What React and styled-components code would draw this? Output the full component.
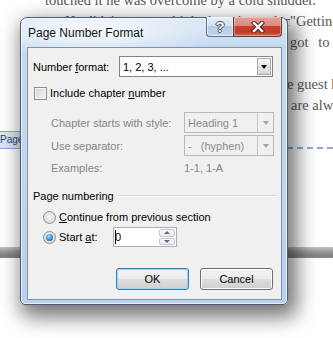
import React from "react";
import styled, { createGlobalStyle } from "styled-components";

const GlobalStyle = createGlobalStyle`
  html, body {
    margin: 0;
    padding: 0;
    background: #fff;
  }
  body {
    width: 333px;
    height: 338px;
    overflow: hidden;
  }
`;

function App() {
  return (
    <Screen>
      <GlobalStyle />
      <DocPage>
        <TextBlock>
          <Line $indent={45}>touched it he was overcome by a cold shudder.</Line>
          <Line $indent={65}>
            <Lead $w={225}>He didn't want to think about it any longer. </Lead>
            <Tail>"Getting</Tail>
          </Line>
          <Line $indent={45}>
            <Lead $w={245}>late, and I think that it is time that we all </Lead>
            <Tail $spacing={6}>got to go</Tail>
          </Line>
          <Line $indent={45} />
          <Line $indent={45}>
            <Lead $w={242}>Everyone at the table knew that th</Lead>
            <Tail>e guest house</Tail>
          </Line>
          <Line $indent={45}>
            <Lead $w={246}>was closed at night, and the doors </Lead>
            <Tail>are always</Tail>
          </Line>
        </TextBlock>
        <FooterRow>
          <FooterTag>Page</FooterTag>
          <DashedRule />
        </FooterRow>
        <PageGap />
      </DocPage>

      <Dialog>
        <TitleBar>
          <Title>Page Number Format</Title>
          <CaptionGroup>
            <HelpButton>
              <HelpGlyph>?</HelpGlyph>
            </HelpButton>
            <CloseButton>
              <svg width="14" height="12" viewBox="0 0 14 12">
                <path d="M3 2 L11 10 M11 2 L3 10" stroke="#4a2620" strokeWidth="4.4" strokeLinecap="square" fill="none" />
                <path d="M3 2 L11 10 M11 2 L3 10" stroke="#ffffff" strokeWidth="2.4" strokeLinecap="square" fill="none" />
              </svg>
            </CloseButton>
          </CaptionGroup>
        </TitleBar>

        <ClientArea>
          <FieldRow>
            <FieldLabel $w={86}>
              Number <u>f</u>ormat:
            </FieldLabel>
            <Combo $w={154}>
              <ComboText>1, 2, 3, ...</ComboText>
              <ComboButton>
                <Arrow />
              </ComboButton>
            </Combo>
          </FieldRow>

          <FieldRow $h={14} $mt={9} $indent={1}>
            <CheckBox />
            <OptionText>
              Include chapter <u>n</u>umber
            </OptionText>
          </FieldRow>

          <FieldRow $mt={12} $indent={18}>
            <FieldLabel $w={133} $disabled>
              Chapter starts with style:
            </FieldLabel>
            <Combo $w={90} $disabled>
              <ComboText>Heading 1</ComboText>
              <ComboButton $disabled>
                <Arrow $disabled />
              </ComboButton>
            </Combo>
          </FieldRow>

          <FieldRow $mt={2} $indent={18}>
            <FieldLabel $w={133} $disabled>
              Use separator:
            </FieldLabel>
            <Combo $w={90} $disabled>
              <ComboText>-   (hyphen)</ComboText>
              <ComboButton $disabled>
                <Arrow $disabled />
              </ComboButton>
            </Combo>
          </FieldRow>

          <FieldRow $h={15} $mt={4} $indent={18}>
            <FieldLabel $w={133} $disabled>
              Examples:
            </FieldLabel>
            <FieldLabel $disabled>1-1, 1-A</FieldLabel>
          </FieldRow>

          <FieldRow $h={15} $mt={13}>
            <GroupTitle>Page numbering</GroupTitle>
            <GroupRule />
          </FieldRow>

          <FieldRow $h={14} $mt={7} $indent={10}>
            <Radio />
            <OptionText>
              <u>C</u>ontinue from previous section
            </OptionText>
          </FieldRow>

          <FieldRow $h={20} $mt={3} $indent={10}>
            <Radio $checked />
            <OptionText $w={54}>
              Start <u>a</u>t:
            </OptionText>
            <SpinField>
              <SpinText>
                <Caret />0
              </SpinText>
              <SpinButtons>
                <SpinButton>
                  <SmallArrow $up />
                </SpinButton>
                <SpinButton>
                  <SmallArrow />
                </SpinButton>
              </SpinButtons>
            </SpinField>
          </FieldRow>

          <ButtonRow>
            <PushButton $default>OK</PushButton>
            <PushButton>Cancel</PushButton>
          </ButtonRow>
        </ClientArea>
      </Dialog>
    </Screen>
  );
}

export default App;

// Page behind the dialog

const Screen = styled.div`
  position: relative;
  width: 333px;
  height: 338px;
  overflow: hidden;
  background: #fff;
`;

const DocPage = styled.div`
  display: flex;
  flex-direction: column;
`;

const TextBlock = styled.div`
  margin-top: -10px;
  font-family: "Liberation Serif", "Times New Roman", serif;
  font-size: 14.5px;
  line-height: 21px;
  color: #5b5654;
`;

const Line = styled.div`
  display: flex;
  height: 21px;
  white-space: nowrap;
  padding-left: ${p => p.$indent || 0}px;
`;

const Lead = styled.span`
  flex: 0 0 ${p => p.$w}px;
  overflow: hidden;
`;

const Tail = styled.span`
  word-spacing: ${p => p.$spacing || 0}px;
`;

const FooterRow = styled.div`
  display: flex;
  align-items: flex-end;
  height: 18px;
  margin-top: 15px;
`;

const FooterTag = styled.div`
  flex: 0 0 auto;
  height: 16px;
  padding: 0 3px 0 0;
  background: #dbe5f3;
  border: 1px solid #8eaadb;
  border-left: none;
  font-family: "Liberation Sans", Arial, sans-serif;
  font-size: 10px;
  line-height: 16px;
  color: #23467a;
`;

const DashedRule = styled.div`
  flex: 1;
  height: 2px;
  background: repeating-linear-gradient(to right, #8eaadb 0 6px, transparent 6px 10px);
`;

const PageGap = styled.div`
  height: 11px;
  margin-top: 98px;
  background: linear-gradient(#c2c2c2, #9a9a9a 40%, #808080 80%, #8c8c8c);
`;

// Dialog window

const Dialog = styled.div`
  position: absolute;
  left: 20px;
  top: 17px;
  width: 268px;
  height: 288px;
  box-sizing: border-box;
  display: flex;
  flex-direction: column;
  padding: 0 5px 4px 6px;
  border: 1px solid #4d5e74;
  border-radius: 7px 7px 5px 5px;
  background:
    radial-gradient(ellipse 130px 26px at 70px 14px, rgba(255, 255, 255, 0.9), rgba(255, 255, 255, 0)),
    linear-gradient(180deg, #dbe8f6 0px, #c6daef 28px, #bad1ec 100%);
  box-shadow:
    inset 0 0 0 1px rgba(255, 255, 255, 0.6),
    5px 8px 20px 4px rgba(0, 0, 0, 0.55);
`;

const TitleBar = styled.div`
  display: flex;
  justify-content: space-between;
  align-items: flex-start;
  height: 29px;
`;

const Title = styled.div`
  padding: 8px 0 0 1px;
  font-family: "Liberation Sans", Arial, sans-serif;
  font-size: 12px;
  line-height: 15px;
  color: #111;
`;

const CaptionGroup = styled.div`
  display: flex;
  margin-top: -1px;
  height: 20px;
`;

const HelpButton = styled.div`
  width: 27px;
  box-sizing: border-box;
  display: flex;
  align-items: center;
  justify-content: center;
  border: 1px solid #5f7088;
  border-top: none;
  border-right: none;
  border-radius: 0 0 0 4px;
  background: linear-gradient(#e6eef8 0%, #d3e1f1 45%, #b5cae4 50%, #c3d6ec 100%);
  box-shadow: inset 0 0 0 1px rgba(255, 255, 255, 0.55);
`;

const HelpGlyph = styled.span`
  font-family: "Liberation Sans", Arial, sans-serif;
  font-weight: bold;
  font-size: 15px;
  line-height: 15px;
  color: #f2f2f2;
  text-shadow:
    1px 0 0 #4a5060, -1px 0 0 #4a5060, 0 1px 0 #4a5060, 0 -1px 0 #4a5060;
`;

const CloseButton = styled.div`
  width: 49px;
  box-sizing: border-box;
  display: flex;
  align-items: center;
  justify-content: center;
  border: 1px solid #5b3a36;
  border-top: none;
  border-radius: 0 0 4px 0;
  background: linear-gradient(#e4a396 0%, #d98a7c 45%, #c7412f 50%, #c23a28 80%, #d66a52 100%);
  box-shadow: inset 0 0 0 1px rgba(255, 220, 210, 0.45);
`;

const ClientArea = styled.div`
  flex: 1;
  display: flex;
  flex-direction: column;
  padding: 8px 5px 0 5px;
  border: 1px solid #8192a8;
  background: #f0f0f0;
  font-family: "Liberation Sans", Arial, sans-serif;
  font-size: 11px;
  color: #000;
`;

const FieldRow = styled.div`
  display: flex;
  align-items: center;
  height: ${p => p.$h || 21}px;
  margin-top: ${p => p.$mt || 0}px;
  padding-left: ${p => p.$indent || 0}px;
`;

const FieldLabel = styled.span`
  flex: 0 0 ${p => (p.$w ? `${p.$w}px` : "auto")};
  white-space: nowrap;
  color: ${p => (p.$disabled ? "#858585" : "#000")};
`;

const Combo = styled.div`
  flex: 0 0 ${p => p.$w}px;
  height: 21px;
  box-sizing: border-box;
  display: flex;
  border: 1px solid ${p => (p.$disabled ? "#b9b9b9" : "#7f8590")};
  background: ${p => (p.$disabled ? "#f0f0f0" : "#fff")};
  color: ${p => (p.$disabled ? "#8a8a8a" : "#000")};
`;

const ComboText = styled.span`
  flex: 1;
  display: flex;
  align-items: center;
  padding-left: 3px;
  white-space: pre;
`;

const ComboButton = styled.span`
  flex: 0 0 ${p => (p.$disabled ? 16 : 14)}px;
  display: flex;
  align-items: center;
  justify-content: center;
  margin: ${p => (p.$disabled ? "0" : "1px")};
  box-sizing: border-box;
  border: ${p => (p.$disabled ? "none" : "1px solid #a9a9a9")};
  border-left: 1px solid ${p => (p.$disabled ? "#c6c6c6" : "#a9a9a9")};
  background: ${p =>
    p.$disabled ? "#f0f0f0" : "linear-gradient(#f5f5f5, #e6e6e6 50%, #d6d6d6)"};
`;

const Arrow = styled.span`
  width: 0;
  height: 0;
  border-left: 3.5px solid transparent;
  border-right: 3.5px solid transparent;
  border-top: 4px solid ${p => (p.$disabled ? "#a6a6a6" : "#000")};
`;

const CheckBox = styled.span`
  flex: 0 0 13px;
  height: 13px;
  box-sizing: border-box;
  border: 1px solid #8e8f8f;
  background: linear-gradient(135deg, #d4d4d4, #f7f7f7);
  box-shadow: inset 0 0 0 1px #f4f4f4;
`;

const OptionText = styled.span`
  flex: 0 0 ${p => (p.$w ? `${p.$w}px` : "auto")};
  margin-left: 3px;
  white-space: nowrap;
`;

const GroupTitle = styled.span`
  flex: 0 0 auto;
  white-space: nowrap;
`;

const GroupRule = styled.span`
  flex: 1;
  height: 1px;
  margin-left: 3px;
  background: #d3dce3;
  box-shadow: 0 1px 0 #fff;
`;

const Radio = styled.span`
  position: relative;
  flex: 0 0 13px;
  height: 13px;
  box-sizing: border-box;
  border-radius: 50%;
  border: 1px solid #8d8f90;
  background: radial-gradient(circle at 50% 40%, #f7f7f7, #d6d6d6 80%);

  &::after {
    content: "";
    display: ${p => (p.$checked ? "block" : "none")};
    position: absolute;
    left: 2px;
    top: 2px;
    width: 7px;
    height: 7px;
    border-radius: 50%;
    background: radial-gradient(circle at 40% 35%, #a9e4fb 0%, #3a9bd4 45%, #0d4f8c 100%);
  }
`;

const SpinField = styled.div`
  flex: 0 0 64px;
  height: 20px;
  box-sizing: border-box;
  display: flex;
  border: 1px solid #abadb3;
  background: #fff;
`;

const SpinText = styled.span`
  flex: 1;
  display: flex;
  align-items: center;
  padding-left: 1px;
`;

const Caret = styled.span`
  width: 1px;
  height: 14px;
  margin-right: -1px;
  background: #000;
`;

const SpinButtons = styled.div`
  flex: 0 0 16px;
  display: flex;
  flex-direction: column;
  gap: 1px;
  padding: 1px;
`;

const SpinButton = styled.div`
  flex: 1;
  display: flex;
  align-items: center;
  justify-content: center;
  border: 1px solid #c3c6cc;
  border-radius: 2px;
  background: linear-gradient(#fafafa, #e8eaee);
`;

const SmallArrow = styled.span`
  width: 0;
  height: 0;
  border-left: 3px solid transparent;
  border-right: 3px solid transparent;
  ${p =>
    p.$up ? "border-bottom: 3px solid #52698e;" : "border-top: 3px solid #52698e;"}
`;

const ButtonRow = styled.div`
  display: flex;
  gap: 11px;
  height: 22px;
  margin-top: 21px;
  padding-left: 83px;
`;

const PushButton = styled.div`
  flex: 0 0 73px;
  box-sizing: border-box;
  display: flex;
  align-items: center;
  justify-content: center;
  border-radius: 3px;
  border: 1px solid ${p => (p.$default ? "#3c7fb1" : "#707070")};
  background: linear-gradient(#f2f2f2 0%, #ebebeb 50%, #dddddd 51%, #cfcfcf 100%);
  box-shadow: inset 0 0 0 1px ${p => (p.$default ? "#95d6f6" : "#fbfbfb")};
  color: #000;
`;
